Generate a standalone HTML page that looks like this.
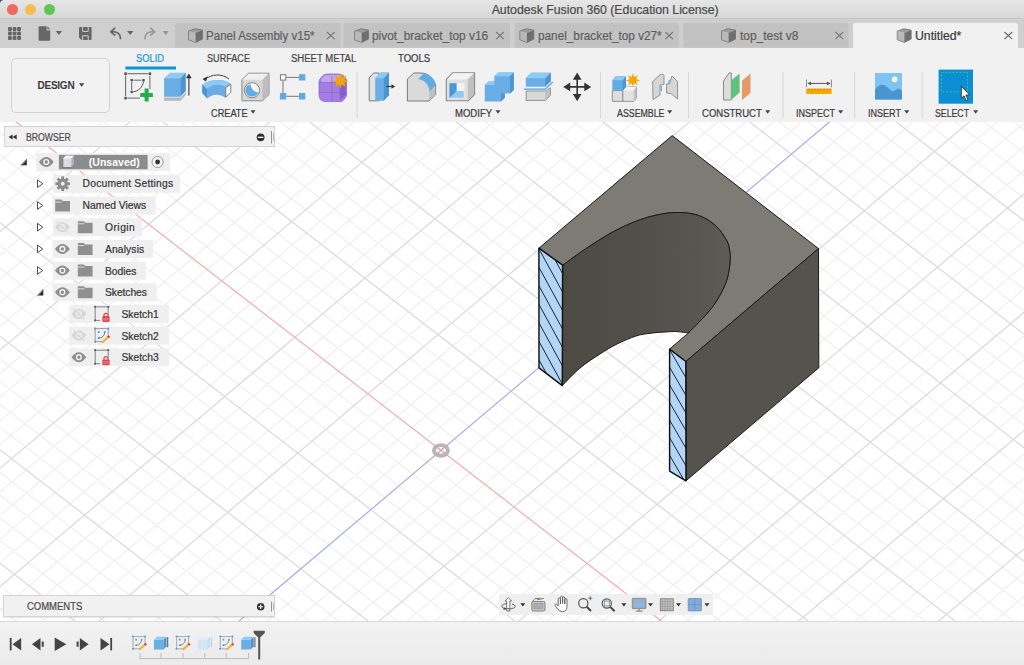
<!DOCTYPE html>
<html><head><meta charset="utf-8"><title>Fusion 360</title>
<style>
html,body{margin:0;padding:0;width:1024px;height:665px;overflow:hidden;background:#fff;}
.abs{position:absolute;}
.txt{font-family:"Liberation Sans",sans-serif;white-space:nowrap;line-height:1;}
.txt{-webkit-text-stroke:0.2px currentColor;}
.b{font-weight:bold;-webkit-text-stroke:0;}
</style></head><body>
<!-- TITLE BAR -->
<div class="abs" style="left:0;top:0;width:1024px;height:18.6px;background:linear-gradient(#e6e6e6,#d7d7d7);border-bottom:1px solid #c6c6c6;box-sizing:border-box"></div>
<div class="abs" style="left:7.2px;top:3.7px;width:11px;height:11px;border-radius:50%;background:#ee6a5e;"></div>
<div class="abs" style="left:25.2px;top:3.7px;width:11px;height:11px;border-radius:50%;background:#f5be4f;"></div>
<div class="abs" style="left:43.5px;top:3.7px;width:11px;height:11px;border-radius:50%;background:#62c655;"></div>

<!-- TAB BAR -->
<div class="abs" style="left:0;top:18.6px;width:1024px;height:29px;background:#cfcfcf;"></div>
<svg class="abs" style="left:0;top:18px" width="180" height="30" viewBox="0 18 180 30">
  <g fill="#666">
    <rect x="8.0" y="27.0" width="3.9" height="3.9" rx="1"/><rect x="12.6" y="27.0" width="3.9" height="3.9" rx="1"/><rect x="17.1" y="27.0" width="3.9" height="3.9" rx="1"/><rect x="8.0" y="31.6" width="3.9" height="3.9" rx="1"/><rect x="12.6" y="31.6" width="3.9" height="3.9" rx="1"/><rect x="17.1" y="31.6" width="3.9" height="3.9" rx="1"/><rect x="8.0" y="36.1" width="3.9" height="3.9" rx="1"/><rect x="12.6" y="36.1" width="3.9" height="3.9" rx="1"/><rect x="17.1" y="36.1" width="3.9" height="3.9" rx="1"/>
    <path d="M39.5 26.2 H46.6 V30.6 H50.2 V39.8 Q50.2 40.8 49.2 40.8 H39.5 Q38.6 40.8 38.6 39.8 V27.2 Q38.6 26.2 39.5 26.2 Z"/>
    <path d="M47.4 26.2 L50.2 29.2 H47.4 Z"/>
    <path d="M55.7 31 H62 L58.85 35 Z"/>
    <path d="M80 27 H90.6 Q91.6 27 91.6 28 V39 Q91.6 40 90.6 40 H81.5 L79 37.5 V28 Q79 27 80 27 Z"/>
  </g>
  <path d="M82.6 27 V31.4 H88.2 V27" fill="none" stroke="#cfcfcf" stroke-width="1"/>
  <path d="M82.6 40 V35.8 H88.2 V40" fill="none" stroke="#cfcfcf" stroke-width="1"/>
  <g fill="#666">
    <path d="M127 31 H133.4 L130.2 35 Z"/>
  </g>
  <path d="M120.5 38.5 C120.5 33 117 31.5 111.5 31.5 M114.8 28.2 L110.8 31.8 L114.8 35.2" fill="none" stroke="#666" stroke-width="1.7" stroke-linecap="round" stroke-linejoin="round"/>
  <path d="M145 38.5 C145 33 148.5 31.5 154 31.5 M150.7 28.2 L154.7 31.8 L150.7 35.2" fill="none" stroke="#999" stroke-width="1.7" stroke-linecap="round" stroke-linejoin="round"/>
  <path d="M162.7 31 H168.9 L165.8 35 Z" fill="#999"/>
</svg>

<!-- corner --><svg class="abs" style="left:0;top:0" width="6" height="6"><path d="M0 0 H3.2 Q0.8 0.6 0 3.2 Z" fill="#3d5a7e"/></svg>

<div class="abs txt" style="left:491.7px;top:3.99px;font-size:12.30px;color:#4a4a4a;letter-spacing:-0.017px;">Autodesk Fusion 360 (Education License)</div>
<svg class="abs" style="left:0;top:0" width="1024" height="48" viewBox="0 0 1024 48">
<path d="M175.0 47.5 V26 Q175.0 22.8 178.0 22.8 H337.6 Q340.6 22.8 340.6 26 V47.5 Z" fill="#c2c2c2"/>
<path d="M188.5 31.1 195.0 28.7 202.5 30.1 195.6 33.1 Z" fill="#9c9c9c"/><path d="M188.5 31.1 195.6 33.1 195.6 42.5 188.5 39.7 Z" fill="#b9b9b9"/><path d="M195.6 33.1 202.5 30.1 202.5 39.1 195.6 42.5 Z" fill="#6f6f6f"/><path d="M188.5 31.1 195.0 28.7 202.5 30.1 202.5 39.1 195.6 42.5 188.5 39.7 Z" fill="none" stroke="#6a6a6a" stroke-width="0.7" stroke-linejoin="round"/>
<path d="M326.9 32 L334.6 39.2 M334.6 32 L326.9 39.2" stroke="#777" stroke-width="1.1"/>
<path d="M343.5 47.5 V26 Q343.5 22.8 346.5 22.8 H507.0 Q510.0 22.8 510.0 26 V47.5 Z" fill="#c2c2c2"/>
<path d="M354.5 31.1 361.0 28.7 368.5 30.1 361.6 33.1 Z" fill="#9c9c9c"/><path d="M354.5 31.1 361.6 33.1 361.6 42.5 354.5 39.7 Z" fill="#b9b9b9"/><path d="M361.6 33.1 368.5 30.1 368.5 39.1 361.6 42.5 Z" fill="#6f6f6f"/><path d="M354.5 31.1 361.0 28.7 368.5 30.1 368.5 39.1 361.6 42.5 354.5 39.7 Z" fill="none" stroke="#6a6a6a" stroke-width="0.7" stroke-linejoin="round"/>
<path d="M496.1 32 L503.8 39.2 M503.8 32 L496.1 39.2" stroke="#777" stroke-width="1.1"/>
<path d="M514.8 47.5 V26 Q514.8 22.8 517.8 22.8 H676.0 Q679.0 22.8 679.0 26 V47.5 Z" fill="#c2c2c2"/>
<path d="M519.8 31.1 526.3 28.7 533.8 30.1 526.9 33.1 Z" fill="#9c9c9c"/><path d="M519.8 31.1 526.9 33.1 526.9 42.5 519.8 39.7 Z" fill="#b9b9b9"/><path d="M526.9 33.1 533.8 30.1 533.8 39.1 526.9 42.5 Z" fill="#6f6f6f"/><path d="M519.8 31.1 526.3 28.7 533.8 30.1 533.8 39.1 526.9 42.5 519.8 39.7 Z" fill="none" stroke="#6a6a6a" stroke-width="0.7" stroke-linejoin="round"/>
<path d="M665.3 32 L673.0 39.2 M673.0 32 L665.3 39.2" stroke="#777" stroke-width="1.1"/>
<path d="M683.4 47.5 V26 Q683.4 22.8 686.4 22.8 H845.6 Q848.6 22.8 848.6 26 V47.5 Z" fill="#c2c2c2"/>
<path d="M721.5 31.1 728.0 28.7 735.5 30.1 728.6 33.1 Z" fill="#9c9c9c"/><path d="M721.5 31.1 728.6 33.1 728.6 42.5 721.5 39.7 Z" fill="#b9b9b9"/><path d="M728.6 33.1 735.5 30.1 735.5 39.1 728.6 42.5 Z" fill="#6f6f6f"/><path d="M721.5 31.1 728.0 28.7 735.5 30.1 735.5 39.1 728.6 42.5 721.5 39.7 Z" fill="none" stroke="#6a6a6a" stroke-width="0.7" stroke-linejoin="round"/>
<path d="M835.5 32 L843.2 39.2 M843.2 32 L835.5 39.2" stroke="#777" stroke-width="1.1"/>
<path d="M853.0 48.0 V26 Q853.0 22.8 856.0 22.8 H1015.0 Q1018.0 22.8 1018.0 26 V48.0 Z" fill="#f1f1f1"/>
<path d="M897.2 31.1 903.7 28.7 911.2 30.1 904.3 33.1 Z" fill="#9c9c9c"/><path d="M897.2 31.1 904.3 33.1 904.3 42.5 897.2 39.7 Z" fill="#b9b9b9"/><path d="M904.3 33.1 911.2 30.1 911.2 39.1 904.3 42.5 Z" fill="#6f6f6f"/><path d="M897.2 31.1 903.7 28.7 911.2 30.1 911.2 39.1 904.3 42.5 897.2 39.7 Z" fill="none" stroke="#6a6a6a" stroke-width="0.7" stroke-linejoin="round"/>
<path d="M1004.5 32 L1012.2 39.2 M1012.2 32 L1004.5 39.2" stroke="#666" stroke-width="1.1"/>
</svg>
<div class="abs txt" style="left:206.0px;top:29.74px;font-size:12.00px;color:#5e5e5e;letter-spacing:0.000px;transform:scaleX(0.9630);transform-origin:0 0;">Panel Assembly v15*</div>
<div class="abs txt" style="left:372.3px;top:29.74px;font-size:12.00px;color:#5e5e5e;letter-spacing:0.000px;transform:scaleX(0.9888);transform-origin:0 0;">pivot_bracket_top v16</div>
<div class="abs txt" style="left:538.0px;top:29.74px;font-size:12.00px;color:#5e5e5e;letter-spacing:0.000px;transform:scaleX(0.9810);transform-origin:0 0;">panel_bracket_top v27*</div>
<div class="abs txt" style="left:739.8px;top:29.74px;font-size:12.00px;color:#5e5e5e;letter-spacing:0.000px;transform:scaleX(0.9948);transform-origin:0 0;">top_test v8</div>
<div class="abs txt" style="left:915.1px;top:29.74px;font-size:12.00px;color:#3a3a3a;letter-spacing:0.000px;transform:scaleX(1.0230);transform-origin:0 0;">Untitled*</div>
<!-- TOOLBAR -->
<div class="abs" style="left:0;top:47.5px;width:1024px;height:74.5px;background:#f1f1f1;"></div>
<div class="abs" style="left:10.5px;top:57.5px;width:99px;height:55px;border:1px solid #d2d2d2;border-radius:5px;box-sizing:border-box;background:#f2f2f2"></div>

<svg class="abs" style="left:0;top:0" width="1024" height="122" viewBox="0 0 1024 122">
  <path d="M79 83.2 H84.4 L81.7 86.8 Z" fill="#444"/>
  <rect x="125.4" y="66.5" width="50.6" height="3" fill="#0a96d6"/>
  <!-- separators -->
  <g fill="#d6d6d6"><rect x="356.6" y="72" width="1" height="46"/><rect x="600" y="72" width="1" height="46"/><rect x="688" y="72" width="1" height="46"/><rect x="782.5" y="72" width="1" height="46"/><rect x="854.2" y="72" width="1" height="46"/><rect x="921.6" y="72" width="1" height="46"/></g>
  <!-- dropdown arrows -->
  <g fill="#444">
    <path d="M250.5 110.3 H255.5 L253.00 113.8 Z"/>
    <path d="M495.5 110.3 H500.5 L498.00 113.8 Z"/>
    <path d="M667.2 110.3 H672.2 L669.70 113.8 Z"/>
    <path d="M765.2 110.3 H770.2 L767.70 113.8 Z"/>
    <path d="M838.2 110.3 H843.2 L840.70 113.8 Z"/>
    <path d="M904.2 110.3 H909.2 L906.70 113.8 Z"/>
    <path d="M973.2 110.3 H978.2 L975.70 113.8 Z"/>
  </g>
  <!-- sketch icon -->
  <g fill="#555">
    <rect x="124.3" y="72.4" width="2.6" height="2.6"/><rect x="148.6" y="72.4" width="2.6" height="2.6"/><rect x="124.3" y="96.8" width="2.6" height="2.6"/>
    <rect x="130.5" y="79" width="2.4" height="2.4"/><rect x="142.3" y="79" width="2.4" height="2.4"/><rect x="130.5" y="90.7" width="2.4" height="2.4"/>
  </g>
  <g stroke="#666" stroke-width="1" fill="none">
    <path d="M127.5 73.7 H148 M125.6 75.6 V96 M127.5 98.1 H140 M149.9 75.6 V89"/>
    <path d="M133.5 80.2 H141.5 M131.7 82 V90"/>
    <path d="M143.5 81.5 C143 87 138 91.5 133.2 91.8" stroke="#555"/>
  </g>
  <path d="M144.6 88.6 H148.6 V93 H152.9 V97 H148.6 V101.4 H144.6 V97 H140.3 V93 H144.6 Z" fill="#22ac4b"/>
  <!-- extrude -->
  <path d="M164 97.5 H180.5 L186 92 V94.8 L180.5 100.8 H164 Z" fill="#b9b9b9"/>
  <path d="M164.1 78.2 L170 72.7 H185.8 L180.2 78.2 Z" fill="#8dcaf6"/>
  <rect x="164.1" y="78.2" width="16.1" height="18.6" fill="#6aaee5"/>
  <path d="M180.2 78.2 L185.8 72.7 V91 L180.2 96.8 Z" fill="#4b95d2"/>
  <rect x="188.2" y="76" width="1.3" height="19.6" fill="#555"/><path d="M186 78.2 L188.85 73.6 L191.7 78.2 Z" fill="#333"/>
  <!-- revolve -->
  <path d="M204 80 C212 73.5 222 73.5 229 79" fill="none" stroke="#444" stroke-width="1"/>
  <path d="M202.5 79 L207.8 76.2 L206 81.5 Z" fill="#333"/>
  <path d="M202.3 84.8 C209 79.5 222 78 230.5 83.5 L230 89 L225.3 97.7 C220 93.5 212 93.5 207.4 98.5 L202.3 93 Z" fill="#6aaee5"/>
  <path d="M202.3 84.8 C209 79.5 222 78 230.5 83.5 L226 87 C220 83.5 212 84 207 89 Z" fill="#8dcaf6"/>
  <path d="M202.3 84.8 L207 89 V98.3 L202.3 93 Z" fill="#4b95d2"/>
  <path d="M225.8 87.5 L230.8 84.3 V92.5 L225.8 97.2 Z" fill="#fff" stroke="#666" stroke-width="0.8"/>
  <!-- hole -->
  <path d="M241.9 79.7 L248.6 73.2 H269 V94.5 L262.5 100.8 H241.9 Z" fill="#d7d7d7" stroke="#8a8a8a" stroke-width="1"/>
  <path d="M242.4 79.7 L248.8 73.7 H268.5 L262.5 79.7 Z" fill="#f0f0f0"/>
  <path d="M262.5 79.7 L268.5 73.7 V94.3 L262.5 100.3 Z" fill="#bdbdbd"/>
  <circle cx="252" cy="90.2" r="7.6" fill="#f4f4f4" stroke="#777" stroke-width="0.9"/>
  <path d="M250.5 84.3 C251 89 254 92 258.2 92.6 C257 95.5 254.8 96.6 252 96.6 C248.3 96.6 245.5 93.8 245.5 90.2 C245.5 87.3 247.6 84.8 250.5 84.3 Z" fill="#62ace4"/>
  <!-- rect pattern -->
  <g stroke="#777" stroke-width="1"><path d="M286.2 77.4 H299 M283 80.5 V93 M286.2 96.3 H299"/></g>
  <rect x="280.4" y="74.7" width="5.4" height="5.4" fill="#f8f8f8" stroke="#7a7a7a" stroke-width="1"/>
  <g fill="#5eaae3"><rect x="299" y="74.2" width="6.3" height="6.3"/><rect x="279.9" y="93" width="6.3" height="6.5"/><rect x="299" y="93" width="6.3" height="6.5"/></g>
  <!-- form -->
  <path d="M327 74 H338 Q343 74 345.5 78 L346.5 80 V95 Q346.5 97 344 99.5 L342 101.6 H326 Q319 101.6 319 94.5 V82 Q319 79.5 321.5 77 L323 75.5 Q324.5 74 327 74 Z" fill="#a47de0" stroke="#9068d0" stroke-width="0.8"/>
  <path d="M321 80 Q323 75 328 75 H338 Q341 75 343 78 L339.5 82.5 H322 Z" fill="#c3a6f0"/>
  <path d="M339.5 86 L346 80 V95 L340 100.5 Z" fill="#8a5fcb"/>
  <path d="M320 82.5 H340 M331.8 76 V101 M319.5 92.5 H340" stroke="#8d62c8" stroke-width="0.7" fill="none"/>
  <path d="M340.5 73 L341.9 77.4 L346.3 75.5 L344.4 79.7 L348.4 81.5 L344.2 82.8 L345.8 87 L341.8 84.6 L340.5 88.6 L339.1 84.6 L335.2 87 L336.7 82.8 L332.6 81.5 L336.6 79.7 L334.7 75.5 L339.1 77.4 Z" fill="#f5a700"/>
  <!-- press pull -->
  <path d="M369.2 78 L373.5 73 H379 V100.8 H369.2 Z" fill="#e2e2e2" stroke="#7a7a7a" stroke-width="1"/>
  <path d="M375.2 78.2 L380.5 72.6 H389 V92.6 L383.8 100.8 H375.2 Z" fill="#6aaee5"/>
  <path d="M375.2 78.2 L380.5 72.6 H389 L383.8 78.2 Z" fill="#8dcaf6"/>
  <path d="M383.8 78.2 L389 72.6 V95.2 L383.8 100.8 Z" fill="#4b95d2"/>
  <path d="M386.5 86.5 H392.5" stroke="#333" stroke-width="1.2"/><path d="M391.5 84.2 L395.2 86.5 L391.5 88.8 Z" fill="#333"/>
  <!-- fillet -->
  <path d="M407.4 79 L413.8 73 H421 C428 73 435 79 435.6 86 V94.8 L429 101 H407.4 Z" fill="#dadada" stroke="#7a7a7a" stroke-width="1"/>
  <path d="M418 79.3 L423.4 73.4 C430 74 435 79 435.4 85.5 L429.5 92 C429 84 424 79.5 418 79.3 Z" fill="#62ace4"/>
  <path d="M429.5 92.3 L435.3 86.5 V94.8 L429 100.8 Z" fill="#c0c0c0"/>
  <!-- shell -->
  <path d="M446.3 79.5 L452.8 72.8 H474.6 V94.5 L468.4 100.8 H446.3 Z" fill="#e0e0e0" stroke="#8a8a8a" stroke-width="1.1"/>
  <path d="M446.8 79.5 L453 73.3 H474 L467.8 79.5 Z" fill="#f3f3f3"/>
  <path d="M467.8 79.5 L474 73.3 V94.3 L467.8 100.3 Z" fill="#c0c0c0"/>
  <rect x="449.8" y="83" width="14.5" height="14.8" fill="#f2f2f2"/>
  <path d="M449.5 83.3 H456.5 V91 H463.8 V97.8 H449.5 Z" fill="#8dcaf6"/>
  <path d="M449.5 83.3 H456.5 V91 L449.5 97.8 Z" fill="#4b95d2"/>
  <!-- combine -->
  <path d="M484.8 85 L488.6 81.5 H494.3 V76.3 L498.5 72.6 H513.8 V90 L510 93.6 H504.8 V97.8 L501 101.6 H484.8 Z" fill="#6aaee5"/>
  <path d="M494.3 76.3 L498.5 72.6 H513.8 L510 76.3 Z M484.8 85 L488.6 81.5 H494.3 V85 Z" fill="#8dcaf6"/>
  <path d="M510 76.3 L513.8 72.6 V90 L510 93.6 Z M501 93.6 H504.8 V97.8 L501 101.6 Z" fill="#4b95d2"/>
  <!-- split -->
  <path d="M525.8 78.2 L531.3 72.7 H550.8 V79.8 L545.3 86.8 H525.8 Z" fill="#6aaee5"/>
  <path d="M525.8 78.2 L531.3 72.7 H550.8 L545.3 78.2 Z" fill="#8dcaf6"/>
  <path d="M545.3 78.2 L550.8 72.7 V81.3 L545.3 86.8 Z" fill="#4b95d2"/>
  <path d="M523.9 89.1 H545.3 L552.8 82" stroke="#4aa6e8" stroke-width="1.2" fill="none"/>
  <path d="M526.2 91 H545.3 L550.5 87.8 V95.5 L545.3 100.4 H526.2 Z" fill="#d8d8d8" stroke="#8a8a8a" stroke-width="0.9"/>
  <path d="M545.3 91.2 L550.2 88.3 V95.3 L545.3 100.1 Z" fill="#c0c0c0"/>
  <!-- move -->
  <path d="M577.2 76 V98 M566.5 86.9 H588" stroke="#333" stroke-width="1.6"/>
  <path d="M577.2 72.6 L581.5 79.8 H572.9 Z M577.2 101.2 L581.5 94 H572.9 Z M563.3 86.9 L570.2 82.6 V91.2 Z M591.2 86.9 L584.3 82.6 V91.2 Z" fill="#333"/>
  <!-- new component -->
  <path d="M612.3 90.6 H622.8 V101.4 H612.3 Z" fill="#dedede" stroke="#8a8a8a" stroke-width="0.9"/>
  <path d="M622.8 90.6 L625.5 87.1 H636.5 V98 L633.7 101.4 H622.8 Z" fill="#e2e2e2" stroke="#8a8a8a" stroke-width="0.9"/>
  <path d="M622.8 90.6 L625.5 87.1 H636.5 L633.7 90.6 Z" fill="#f4f4f4"/>
  <path d="M633.7 90.6 L636.5 87.1 V98 L633.7 101.4 Z" fill="#c4c4c4"/>
  <path d="M612.3 80.3 L615.5 76.2 H626 V87 L622.8 90.6 H612.3 Z" fill="#62ace4"/>
  <path d="M612.3 80.3 L615.5 76.2 H626 L622.8 80.3 Z" fill="#8dcaf6"/>
  <path d="M622.8 80.3 L626 76.2 V87 L622.8 90.6 Z" fill="#4b95d2"/>
  <path d="M632.9 73 L634.1 76.9 L637.8 75.2 L636.2 78.9 L639.9 80.4 L636.2 81.6 L637.6 85.3 L634.1 83.2 L632.9 86.8 L631.7 83.2 L628.2 85.3 L629.6 81.6 L625.9 80.4 L629.6 78.9 L628 75.2 L631.7 76.9 Z" fill="#f5a700"/>
  <!-- joint -->
  <path d="M652.6 81.5 L660 74.8 C662 73.8 664 74 664 76 V84.6 L660 85 V95 L653 99.5 Z" fill="#d6d6d6" stroke="#8a8a8a" stroke-width="0.9"/>
  <path d="M672 76 L677.6 81.5 V99 L671 93.6 L666.5 93 V84 L669.5 83.5 Z" fill="#d6d6d6" stroke="#8a8a8a" stroke-width="0.9"/>
  <path d="M661.3 86 V91 M669 80 V84.5" stroke="#4aa6e8" stroke-width="1.1"/>
  <!-- construct -->
  <path d="M723.5 81 L729 73 H731.3 V100 H723.5 Z" fill="#dcdcdc" stroke="#8a8a8a" stroke-width="1"/>
  <path d="M731.1 80.5 L739.6 73.4 V92.5 L731.1 100 Z" fill="#5fc27b"/>
  <path d="M742 80.7 L750.5 73.4 V93 L742 100.1 Z" fill="#e59a68"/>
  <!-- measure -->
  <path d="M806.5 79.5 V87.3 M831.4 79.5 V87.3" stroke="#888" stroke-width="1"/>
  <path d="M808 83.4 H830" stroke="#555" stroke-width="1"/>
  <path d="M807.5 83.4 L811 81.5 V85.3 Z M830.4 83.4 L826.9 81.5 V85.3 Z" fill="#555"/>
  <rect x="806.2" y="88.6" width="25.4" height="5.4" fill="#f5a800"/>
  <path d="M809 88.6 V90.3 M812 88.6 V90.3 M815 88.6 V90.3 M818 88.6 V90.3 M821 88.6 V90.3 M824 88.6 V90.3 M827 88.6 V90.3 M830 88.6 V90.3" stroke="#9a6a00" stroke-width="0.6"/>
  <!-- insert -->
  <rect x="875" y="73" width="27" height="26.6" fill="#7ec3f3"/>
  <path d="M875 90 C879 84 883 83.5 887 87 C890 89.5 892.5 93 895 90.5 C897.5 88 900 88.5 902 91 V99.6 H875 Z" fill="#4a94cf"/>
  <circle cx="894.6" cy="79.4" r="2.8" fill="#fbf5c9"/>
  <!-- select -->
  <rect x="938.6" y="69.6" width="34.4" height="34.1" fill="#0b8fd4"/>
  <rect x="941.5" y="72.5" width="26" height="19.3" fill="none" stroke="#49bd82" stroke-width="0.9" stroke-dasharray="2,1.6"/>
  <path d="M961.3 86.3 V98.3 L964 95.8 L966.2 100.5 L968 99.6 L965.9 95 L969.7 94.9 Z" fill="#fff" stroke="#222" stroke-width="0.8"/>
</svg>

<div class="abs txt b" style="left:37.5px;top:80.94px;font-size:10.00px;color:#3a3a3a;letter-spacing:-0.248px;">DESIGN</div>
<div class="abs txt" style="left:136.0px;top:53.73px;font-size:10.00px;color:#1a97d5;letter-spacing:0.000px;transform:scaleX(0.9330);transform-origin:0 0;">SOLID</div>
<div class="abs txt" style="left:206.6px;top:53.73px;font-size:10.00px;color:#444;letter-spacing:0.000px;transform:scaleX(0.9104);transform-origin:0 0;">SURFACE</div>
<div class="abs txt" style="left:290.6px;top:53.73px;font-size:10.00px;color:#444;letter-spacing:0.000px;transform:scaleX(0.9517);transform-origin:0 0;">SHEET METAL</div>
<div class="abs txt" style="left:397.8px;top:53.73px;font-size:10.00px;color:#3a3a3a;letter-spacing:0.000px;transform:scaleX(0.9550);transform-origin:0 0;">TOOLS</div>
<div class="abs txt" style="left:211.0px;top:108.83px;font-size:10.00px;color:#3a3a3a;letter-spacing:0.000px;transform:scaleX(0.9192);transform-origin:0 0;">CREATE</div>
<div class="abs txt" style="left:454.7px;top:108.83px;font-size:10.00px;color:#3a3a3a;letter-spacing:0.000px;transform:scaleX(0.9541);transform-origin:0 0;">MODIFY</div>
<div class="abs txt" style="left:616.5px;top:108.83px;font-size:10.00px;color:#3a3a3a;letter-spacing:0.000px;transform:scaleX(0.8811);transform-origin:0 0;">ASSEMBLE</div>
<div class="abs txt" style="left:702.4px;top:108.83px;font-size:10.00px;color:#3a3a3a;letter-spacing:0.000px;transform:scaleX(0.9526);transform-origin:0 0;">CONSTRUCT</div>
<div class="abs txt" style="left:796.4px;top:108.83px;font-size:10.00px;color:#3a3a3a;letter-spacing:0.000px;transform:scaleX(0.9022);transform-origin:0 0;">INSPECT</div>
<div class="abs txt" style="left:867.5px;top:108.83px;font-size:10.00px;color:#3a3a3a;letter-spacing:0.000px;transform:scaleX(0.9044);transform-origin:0 0;">INSERT</div>
<div class="abs txt" style="left:935.0px;top:108.83px;font-size:10.00px;color:#3a3a3a;letter-spacing:0.000px;transform:scaleX(0.8740);transform-origin:0 0;">SELECT</div>
<svg class="abs" style="left:0;top:122px" width="1024" height="499" viewBox="0 122 1024 499" shape-rendering="geometricPrecision">
<rect x="0" y="122" width="1024" height="499" fill="#ffffff"/>
<path d="M0 -775.67 L1024 16.50 M0 -752.98 L1024 39.19 M0 -730.28 L1024 61.88 M0 -707.59 L1024 84.57 M0 -662.21 L1024 129.96 M0 -639.52 L1024 152.65 M0 -616.82 L1024 175.34 M0 -594.13 L1024 198.03 M0 -548.75 L1024 243.42 M0 -526.06 L1024 266.11 M0 -503.36 L1024 288.80 M0 -480.67 L1024 311.49 M0 -435.29 L1024 356.88 M0 -412.60 L1024 379.57 M0 -389.90 L1024 402.26 M0 -367.21 L1024 424.95 M0 -321.83 L1024 470.34 M0 -299.14 L1024 493.03 M0 -276.44 L1024 515.72 M0 -253.75 L1024 538.41 M0 -208.37 L1024 583.80 M0 -185.68 L1024 606.49 M0 -162.98 L1024 629.18 M0 -140.29 L1024 651.87 M0 -94.91 L1024 697.26 M0 -72.22 L1024 719.95 M0 -49.52 L1024 742.64 M0 -26.83 L1024 765.33 M0 18.55 L1024 810.72 M0 41.24 L1024 833.41 M0 63.94 L1024 856.10 M0 86.63 L1024 878.79 M0 132.01 L1024 924.18 M0 154.70 L1024 946.87 M0 177.40 L1024 969.56 M0 200.09 L1024 992.25 M0 245.47 L1024 1037.64 M0 268.16 L1024 1060.33 M0 290.86 L1024 1083.02 M0 313.55 L1024 1105.71 M0 358.93 L1024 1151.10 M0 381.62 L1024 1173.79 M0 404.32 L1024 1196.48 M0 427.01 L1024 1219.17 M0 472.39 L1024 1264.56 M0 495.08 L1024 1287.25 M0 517.78 L1024 1309.94 M0 540.47 L1024 1332.63 M0 585.85 L1024 1378.02 M0 608.54 L1024 1400.71 M0 631.24 L1024 1423.40 M0 653.93 L1024 1446.09 M0 699.31 L1024 1491.48 M0 722.00 L1024 1514.17 M0 744.70 L1024 1536.86 M0 767.39 L1024 1559.55 M0 18.76 L1024 -846.92 M0 42.42 L1024 -823.27 M0 66.08 L1024 -799.61 M0 89.74 L1024 -775.95 M0 137.05 L1024 -728.63 M0 160.71 L1024 -704.98 M0 184.37 L1024 -681.32 M0 208.03 L1024 -657.66 M0 255.34 L1024 -610.34 M0 279.00 L1024 -586.69 M0 302.66 L1024 -563.03 M0 326.32 L1024 -539.37 M0 373.63 L1024 -492.05 M0 397.29 L1024 -468.40 M0 420.95 L1024 -444.74 M0 444.61 L1024 -421.08 M0 491.92 L1024 -373.76 M0 515.58 L1024 -350.11 M0 539.24 L1024 -326.45 M0 562.90 L1024 -302.79 M0 610.21 L1024 -255.47 M0 633.87 L1024 -231.82 M0 657.53 L1024 -208.16 M0 681.19 L1024 -184.50 M0 728.50 L1024 -137.18 M0 752.16 L1024 -113.53 M0 775.82 L1024 -89.87 M0 799.48 L1024 -66.21 M0 846.79 L1024 -18.89 M0 870.45 L1024 4.76 M0 894.11 L1024 28.42 M0 917.77 L1024 52.08 M0 965.08 L1024 99.40 M0 988.74 L1024 123.05 M0 1012.40 L1024 146.71 M0 1036.06 L1024 170.37 M0 1083.37 L1024 217.69 M0 1107.03 L1024 241.34 M0 1130.69 L1024 265.00 M0 1154.35 L1024 288.66 M0 1201.66 L1024 335.98 M0 1225.32 L1024 359.63 M0 1248.98 L1024 383.29 M0 1272.64 L1024 406.95 M0 1319.95 L1024 454.27 M0 1343.61 L1024 477.92 M0 1367.27 L1024 501.58 M0 1390.93 L1024 525.24 M0 1438.24 L1024 572.56 M0 1461.90 L1024 596.21 M0 1485.56 L1024 619.87 M0 1509.22 L1024 643.53 M0 1556.53 L1024 690.85 M0 1580.19 L1024 714.50 M0 1603.85 L1024 738.16 M0 1627.51 L1024 761.82" stroke="#efefef" stroke-width="1.2" fill="none"/>
<path d="M0 -798.36 L1024 -6.19 M0 -684.90 L1024 107.27 M0 -571.44 L1024 220.73 M0 -457.98 L1024 334.19 M0 -344.52 L1024 447.65 M0 -231.06 L1024 561.11 M0 -117.60 L1024 674.57 M0 -4.14 L1024 788.03 M0 222.78 L1024 1014.95 M0 336.24 L1024 1128.41 M0 449.70 L1024 1241.87 M0 563.16 L1024 1355.33 M0 676.62 L1024 1468.79 M0 -4.89 L1024 -870.58 M0 113.40 L1024 -752.29 M0 231.69 L1024 -634.00 M0 349.98 L1024 -515.71 M0 468.27 L1024 -397.42 M0 586.56 L1024 -279.13 M0 704.85 L1024 -160.84 M0 941.43 L1024 75.74 M0 1059.72 L1024 194.03 M0 1178.01 L1024 312.32 M0 1296.30 L1024 430.61 M0 1414.59 L1024 548.90 M0 1532.88 L1024 667.19" stroke="#dbdbdb" stroke-width="1.25" fill="none"/>
<path d="M0 109.32 L1024 901.49" stroke="#f4abab" stroke-width="1.2"/>
<path d="M0 823.14 L1024 -42.55" stroke="#a8a8f2" stroke-width="1.2"/>
<ellipse cx="440.9" cy="450.4" rx="7" ry="5.3" fill="none" stroke="#b6b6b6" stroke-width="3.9"/>
<path d="M432.9 444.2 L448.9 456.6 M432.9 457.2 L448.9 443.6" stroke="#e9a0a0" stroke-width="1"/>
<defs><linearGradient id="inner" x1="0" y1="0" x2="1" y2="0"><stop offset="0" stop-color="#4d4943"/><stop offset="0.5" stop-color="#53504a"/><stop offset="0.85" stop-color="#595752"/><stop offset="1" stop-color="#5e5c57"/></linearGradient><pattern id="hatch" patternUnits="userSpaceOnUse" width="10" height="18.3" patternTransform="rotate(0)"><rect width="10" height="18.3" fill="#b3d6f8"/></pattern></defs>
<path d="M538.9 248.2 L672.2 135.6 L818.5 248.6 L685.8 361.5 L669.6 349.1 L688.4 333 L688.9 332.2 C690.7 330.4 695.9 325.4 699.7 321.4 C703.5 317.4 708.1 312.8 711.7 308.0 C715.3 303.2 718.8 297.5 721.4 292.5 C724.0 287.5 725.9 283.4 727.4 278.0 C728.9 272.6 729.9 264.7 730.2 260.0 C730.6 255.3 730.1 253.2 729.5 250.0 C728.9 246.8 729.0 244.8 726.8 240.8 C724.5 236.8 720.7 230.2 716.0 226.0 C711.3 221.8 705.2 217.7 698.4 215.4 C691.6 213.2 683.5 212.2 675.0 212.5 C666.5 212.8 657.1 214.6 647.7 217.3 C638.3 220.1 628.2 224.1 618.4 229.0 C608.6 233.9 598.3 240.6 589.0 246.6 C579.7 252.6 567.1 262.1 562.7 265.2 Z" fill="#7e7a74" stroke="#1a1a1a" stroke-width="1" stroke-linejoin="round"/>
<path d="M685.8 361.5 L818.5 248.6 L818.8 367.7 L686.0 480.8 Z" fill="#56524c" stroke="#1a1a1a" stroke-width="1" stroke-linejoin="round"/>
<path d="M562.7 265.2 C567.1 262.1 579.7 252.6 589.0 246.6 C598.3 240.6 608.6 233.9 618.4 229.0 C628.2 224.1 638.3 220.1 647.7 217.3 C657.1 214.6 666.5 212.8 675.0 212.5 C683.5 212.2 691.6 213.2 698.4 215.4 C705.2 217.7 711.3 221.8 716.0 226.0 C720.7 230.2 724.5 236.8 726.8 240.8 C729.0 244.8 728.9 246.8 729.5 250.0 C730.1 253.2 730.6 255.3 730.2 260.0 C729.9 264.7 728.9 272.6 727.4 278.0 C725.9 283.4 724.0 287.5 721.4 292.5 C718.8 297.5 715.3 303.2 711.7 308.0 C708.1 312.8 703.5 317.4 699.7 321.4 C695.9 325.4 690.7 330.4 688.9 332.2 L688.4 333  C686.5 332.8 680.7 331.8 677.0 331.6 C673.3 331.4 670.5 331.6 666.0 331.9 C661.5 332.2 655.0 332.6 650.0 333.3 C645.0 334.0 641.5 334.2 636.0 336.0 C630.5 337.8 623.0 341.0 617.0 344.0 C611.0 347.0 606.2 350.0 600.0 354.0 C593.8 358.0 586.3 362.7 580.0 368.0 C573.7 373.3 565.2 382.7 562.3 385.6 L562.6 265.2 Z" fill="url(#inner)" stroke="#1a1a1a" stroke-width="1"/>
<clipPath id="hc1"><path d="M538.9 248.2 L562.6 265.2 L562.3 385.6 L539.0 367.9 Z"/></clipPath><path d="M538.9 248.2 L562.6 265.2 L562.3 385.6 L539.0 367.9 Z" fill="#b3d6f8"/><path d="M533.9 17.6 L578.9 100.0 M533.9 36.1 L578.9 118.5 M533.9 54.6 L578.9 137.0 M533.9 73.1 L578.9 155.5 M533.9 91.6 L578.9 174.0 M533.9 110.1 L578.9 192.5 M533.9 128.6 L578.9 211.0 M533.9 147.1 L578.9 229.5 M533.9 165.6 L578.9 248.0 M533.9 184.1 L578.9 266.5 M533.9 202.6 L578.9 285.0 M533.9 221.1 L578.9 303.5 M533.9 239.6 L578.9 322.0 M533.9 258.1 L578.9 340.5 M533.9 276.6 L578.9 359.0 M533.9 295.1 L578.9 377.5 M533.9 313.6 L578.9 396.0 M533.9 332.1 L578.9 414.5 M533.9 350.6 L578.9 433.0 M533.9 369.1 L578.9 451.5 M533.9 387.6 L578.9 470.0 M533.9 406.1 L578.9 488.5 M533.9 424.6 L578.9 507.0 M533.9 443.1 L578.9 525.5" stroke="#111" stroke-width="0.9" clip-path="url(#hc1)"/><path d="M538.9 248.2 L562.6 265.2 L562.3 385.6 L539.0 367.9 Z" fill="none" stroke="#111" stroke-width="1.45" stroke-linejoin="round"/>
<clipPath id="hc2"><path d="M669.6 349.1 L685.8 361.5 L686.0 480.8 L669.6 471.1 Z"/></clipPath><path d="M669.6 349.1 L685.8 361.5 L686.0 480.8 L669.6 471.1 Z" fill="#b3d6f8"/><path d="M664.6 129.9 L709.6 207.3 M664.6 147.5 L709.6 224.9 M664.6 165.1 L709.6 242.5 M664.6 182.7 L709.6 260.1 M664.6 200.3 L709.6 277.7 M664.6 217.9 L709.6 295.3 M664.6 235.5 L709.6 312.9 M664.6 253.1 L709.6 330.5 M664.6 270.7 L709.6 348.1 M664.6 288.3 L709.6 365.7 M664.6 305.9 L709.6 383.3 M664.6 323.5 L709.6 400.9 M664.6 341.1 L709.6 418.5 M664.6 358.7 L709.6 436.1 M664.6 376.3 L709.6 453.7 M664.6 393.9 L709.6 471.3 M664.6 411.5 L709.6 488.9 M664.6 429.1 L709.6 506.5 M664.6 446.7 L709.6 524.1 M664.6 464.3 L709.6 541.7 M664.6 481.9 L709.6 559.3 M664.6 499.5 L709.6 576.9 M664.6 517.1 L709.6 594.5 M664.6 534.7 L709.6 612.1" stroke="#111" stroke-width="0.9" clip-path="url(#hc2)"/><path d="M669.6 349.1 L685.8 361.5 L686.0 480.8 L669.6 471.1 Z" fill="none" stroke="#111" stroke-width="1.45" stroke-linejoin="round"/>
</svg>
<div class="abs" style="left:3.5px;top:126.4px;width:271px;height:21.1px;background:#f1f1f1;border:1px solid #d3d3d3;box-sizing:border-box;"></div>
<div class="abs txt" style="left:26.4px;top:132.63px;font-size:10.00px;color:#4a4a4a;letter-spacing:0.000px;transform:scaleX(0.8670);transform-origin:0 0;">BROWSER</div>
<svg class="abs" style="left:0;top:120px" width="280" height="260" viewBox="0 120 280 260">
<path d="M8.5 137 L12.6 134.5 V139.5 Z M12.6 137 L16.7 134.5 V139.5 Z" fill="#333"/>
<circle cx="260.6" cy="137.3" r="3.9" fill="#2e2e2e"/><rect x="257.9" y="136.7" width="5.4" height="1.3" fill="#fff"/>
<rect x="271" y="131" width="0.9" height="12.5" fill="#8a8a8a"/><rect x="273" y="133" width="0.8" height="8" fill="#b0b0b0"/>
<rect x="36.0" y="153.1" width="134.0" height="18" fill="#efefef"/>
<rect x="52.7" y="174.8" width="127.3" height="18" fill="#efefef"/>
<rect x="52.7" y="196.6" width="102.9" height="18" fill="#efefef"/>
<rect x="52.8" y="218.3" width="89.1" height="18" fill="#efefef"/>
<rect x="52.8" y="240.0" width="100.0" height="18" fill="#efefef"/>
<rect x="52.8" y="261.6" width="93.0" height="18" fill="#efefef"/>
<rect x="52.8" y="283.3" width="103.9" height="18" fill="#efefef"/>
<rect x="69.1" y="305.0" width="99.9" height="18" fill="#efefef"/>
<rect x="69.1" y="326.7" width="99.9" height="18" fill="#efefef"/>
<rect x="69.1" y="348.3" width="99.9" height="18" fill="#efefef"/>
<path d="M20.5 165.3 L26.8 158.7 L26.8 165.3 Z" fill="#2a2a2a"/><path d="M22.0 164.6 L26.0 160.5" stroke="#fff" stroke-width="0.6"/>
<path d="M38.9 162.0 Q46.3 152.0 53.7 162.0 Q46.3 172.0 38.9 162.0 Z" fill="#8e8e8e"/><circle cx="46.3" cy="162.0" r="2.4" fill="none" stroke="#f0f0f0" stroke-width="1.4"/>
<rect x="58.9" y="154.9" width="88.7" height="14.4" fill="#8c8c8c"/>
<path d="M62.8 158.6 L65.8 155.6 H74.3 V164.6 L71.4 167.6 H62.8 Z" fill="#d9dce4" stroke="#5e5e5e" stroke-width="0.7" stroke-linejoin="round"/><path d="M62.8 158.6 L65.8 155.6 H74.3 L71.4 158.6 Z" fill="#f2f3f7"/><path d="M71.4 158.6 L74.3 155.6 V164.6 L71.4 167.6 Z" fill="#a9adb8"/>
<circle cx="157.6" cy="162" r="5.6" fill="#f4f4f4" stroke="#9a9a9a" stroke-width="1"/><circle cx="157.6" cy="162" r="2.4" fill="#333"/>
<path d="M37.5 179.9 L42.8 183.7 L37.5 187.5 Z" fill="#fff" stroke="#3a3a3a" stroke-width="0.9" stroke-linejoin="round"/>
<g fill="#8c8c8c"><rect x="61.3" y="176.4" width="2.8" height="3.2" transform="rotate(0 62.7 183.7)"/><rect x="61.3" y="176.4" width="2.8" height="3.2" transform="rotate(45 62.7 183.7)"/><rect x="61.3" y="176.4" width="2.8" height="3.2" transform="rotate(90 62.7 183.7)"/><rect x="61.3" y="176.4" width="2.8" height="3.2" transform="rotate(135 62.7 183.7)"/><rect x="61.3" y="176.4" width="2.8" height="3.2" transform="rotate(180 62.7 183.7)"/><rect x="61.3" y="176.4" width="2.8" height="3.2" transform="rotate(225 62.7 183.7)"/><rect x="61.3" y="176.4" width="2.8" height="3.2" transform="rotate(270 62.7 183.7)"/><rect x="61.3" y="176.4" width="2.8" height="3.2" transform="rotate(315 62.7 183.7)"/><circle cx="62.7" cy="183.7" r="5.2"/></g><circle cx="62.7" cy="183.7" r="2" fill="#efefef"/>
<path d="M37.5 201.7 L42.8 205.5 L37.5 209.3 Z" fill="#fff" stroke="#3a3a3a" stroke-width="0.9" stroke-linejoin="round"/>
<path d="M55.2 199.5 H61.2 L62.7 201.1 H70.0 V211.5 H55.2 Z" fill="#8f8f8f"/><path d="M55.2 202.1 H61.7" stroke="#f0f0f0" stroke-width="0.8"/>
<path d="M37.5 223.4 L42.8 227.2 L37.5 231.0 Z" fill="#fff" stroke="#3a3a3a" stroke-width="0.9" stroke-linejoin="round"/>
<path d="M55.0 227.2 Q62.4 217.2 69.8 227.2 Q62.4 237.2 55.0 227.2 Z" fill="#d6d6d6"/><circle cx="62.4" cy="227.2" r="2.4" fill="none" stroke="#f0f0f0" stroke-width="1.4"/><path d="M56.9 221.7 L67.9 232.7" stroke="#d6d6d6" stroke-width="1.1"/><path d="M57.2 220.7 L68.6 232.1" stroke="#efefef" stroke-width="0.8"/>
<path d="M77.8 221.2 H83.8 L85.3 222.8 H92.6 V233.2 H77.8 Z" fill="#8f8f8f"/><path d="M77.8 223.8 H84.3" stroke="#f0f0f0" stroke-width="0.8"/>
<path d="M37.5 245.1 L42.8 248.9 L37.5 252.7 Z" fill="#fff" stroke="#3a3a3a" stroke-width="0.9" stroke-linejoin="round"/>
<path d="M55.0 248.9 Q62.4 238.9 69.8 248.9 Q62.4 258.9 55.0 248.9 Z" fill="#8e8e8e"/><circle cx="62.4" cy="248.9" r="2.4" fill="none" stroke="#f0f0f0" stroke-width="1.4"/>
<path d="M77.8 242.9 H83.8 L85.3 244.5 H92.6 V254.9 H77.8 Z" fill="#8f8f8f"/><path d="M77.8 245.5 H84.3" stroke="#f0f0f0" stroke-width="0.8"/>
<path d="M37.5 266.7 L42.8 270.5 L37.5 274.3 Z" fill="#fff" stroke="#3a3a3a" stroke-width="0.9" stroke-linejoin="round"/>
<path d="M55.0 270.5 Q62.4 260.5 69.8 270.5 Q62.4 280.5 55.0 270.5 Z" fill="#8e8e8e"/><circle cx="62.4" cy="270.5" r="2.4" fill="none" stroke="#f0f0f0" stroke-width="1.4"/>
<path d="M77.8 264.5 H83.8 L85.3 266.1 H92.6 V276.5 H77.8 Z" fill="#8f8f8f"/><path d="M77.8 267.1 H84.3" stroke="#f0f0f0" stroke-width="0.8"/>
<path d="M37.0 295.5 L43.3 288.9 L43.3 295.5 Z" fill="#2a2a2a"/><path d="M38.5 294.8 L42.5 290.7" stroke="#fff" stroke-width="0.6"/>
<path d="M55.0 292.2 Q62.4 282.2 69.8 292.2 Q62.4 302.2 55.0 292.2 Z" fill="#8e8e8e"/><circle cx="62.4" cy="292.2" r="2.4" fill="none" stroke="#f0f0f0" stroke-width="1.4"/>
<path d="M77.8 286.2 H83.8 L85.3 287.8 H92.6 V298.2 H77.8 Z" fill="#8f8f8f"/><path d="M77.8 288.8 H84.3" stroke="#f0f0f0" stroke-width="0.8"/>
<path d="M71.5 313.9 Q78.9 303.9 86.3 313.9 Q78.9 323.9 71.5 313.9 Z" fill="#d6d6d6"/><circle cx="78.9" cy="313.9" r="2.4" fill="none" stroke="#f0f0f0" stroke-width="1.4"/><path d="M73.4 308.4 L84.4 319.4" stroke="#d6d6d6" stroke-width="1.1"/><path d="M73.7 307.4 L85.1 318.8" stroke="#efefef" stroke-width="0.8"/>
<path d="M95.2 306.9 H108.2 V313.9 M95.2 306.9 V320.4 H100.2" stroke="#777" stroke-width="0.9" fill="none"/><g fill="#555"><rect x="94.2" y="305.9" width="1.8" height="1.8"/><rect x="107.4" y="305.9" width="1.8" height="1.8"/><rect x="94.2" y="319.5" width="1.8" height="1.8"/></g><rect x="102.4" y="316.1" width="7.2" height="5.8" rx="0.8" fill="#e0454b"/><path d="M104.0 316.4 V314.5 Q106.0 312.1 108.0 314.5 V316.4" stroke="#e0454b" stroke-width="1.3" fill="none"/><path d="M103.4 318.4 H108.6 M103.4 319.9 H108.6" stroke="#f3a0a3" stroke-width="0.6"/>
<path d="M71.5 335.6 Q78.9 325.6 86.3 335.6 Q78.9 345.6 71.5 335.6 Z" fill="#d6d6d6"/><circle cx="78.9" cy="335.6" r="2.4" fill="none" stroke="#f0f0f0" stroke-width="1.4"/><path d="M73.4 330.1 L84.4 341.1" stroke="#d6d6d6" stroke-width="1.1"/><path d="M73.7 329.1 L85.1 340.5" stroke="#efefef" stroke-width="0.8"/>
<path d="M95.2 328.6 H108.2 V337.6 M95.2 328.6 V341.6 H103.2" stroke="#888" stroke-width="0.8" fill="none"/><g fill="#3d9ee6"><rect x="94.2" y="327.6" width="1.8" height="1.8"/><rect x="107.4" y="327.6" width="1.8" height="1.8"/><rect x="94.2" y="340.8" width="1.8" height="1.8"/><rect x="97.8" y="331.2" width="1.8" height="1.8"/><rect x="103.8" y="331.2" width="1.8" height="1.8"/><rect x="97.8" y="337.2" width="1.8" height="1.8"/></g><path d="M104.7 332.6 Q104.2 337.6 98.7 338.1" stroke="#666" stroke-width="0.8" fill="none"/><path d="M101.2 342.1 L107.7 336.1 L109.2 337.6 L102.7 343.6 Z" fill="#f2b134"/><path d="M107.8 336.0 L109.6 337.5" stroke="#e53c3c" stroke-width="2.2"/>
<path d="M71.5 357.2 Q78.9 347.2 86.3 357.2 Q78.9 367.2 71.5 357.2 Z" fill="#8e8e8e"/><circle cx="78.9" cy="357.2" r="2.4" fill="none" stroke="#f0f0f0" stroke-width="1.4"/>
<path d="M95.2 350.2 H108.2 V357.2 M95.2 350.2 V363.7 H100.2" stroke="#777" stroke-width="0.9" fill="none"/><g fill="#555"><rect x="94.2" y="349.2" width="1.8" height="1.8"/><rect x="107.4" y="349.2" width="1.8" height="1.8"/><rect x="94.2" y="362.8" width="1.8" height="1.8"/></g><rect x="102.4" y="359.4" width="7.2" height="5.8" rx="0.8" fill="#e0454b"/><path d="M104.0 359.7 V357.8 Q106.0 355.4 108.0 357.8 V359.7" stroke="#e0454b" stroke-width="1.3" fill="none"/><path d="M103.4 361.7 H108.6 M103.4 363.2 H108.6" stroke="#f3a0a3" stroke-width="0.6"/>
</svg>
<div class="abs txt b" style="left:88.8px;top:157.01px;font-size:10.50px;color:#ffffff;letter-spacing:0.017px;">(Unsaved)</div>
<div class="abs txt" style="left:82.6px;top:179.48px;font-size:10.30px;color:#333333;letter-spacing:0.219px;">Document Settings</div>
<div class="abs txt" style="left:82.6px;top:201.28px;font-size:10.30px;color:#333333;letter-spacing:0.027px;">Named Views</div>
<div class="abs txt" style="left:105.0px;top:223.28px;font-size:10.30px;color:#333333;letter-spacing:0.467px;">Origin</div>
<div class="abs txt" style="left:105.0px;top:244.98px;font-size:10.30px;color:#333333;letter-spacing:0.123px;">Analysis</div>
<div class="abs txt" style="left:105.0px;top:266.58px;font-size:10.30px;color:#333333;letter-spacing:-0.017px;">Bodies</div>
<div class="abs txt" style="left:105.0px;top:288.28px;font-size:10.30px;color:#333333;letter-spacing:-0.065px;">Sketches</div>
<div class="abs txt" style="left:121.4px;top:309.98px;font-size:10.30px;color:#333333;letter-spacing:0.016px;">Sketch1</div>
<div class="abs txt" style="left:121.4px;top:331.68px;font-size:10.30px;color:#333333;letter-spacing:0.016px;">Sketch2</div>
<div class="abs txt" style="left:121.4px;top:353.28px;font-size:10.30px;color:#333333;letter-spacing:0.016px;">Sketch3</div>
<div class="abs" style="left:3.4px;top:595.2px;width:271.3px;height:21.5px;background:#f1f1f1;border:1px solid #d3d3d3;box-sizing:border-box;box-shadow:0 1px 1px rgba(0,0,0,0.08);"></div>
<div class="abs txt" style="left:26.7px;top:602.03px;font-size:10.00px;color:#4a4a4a;letter-spacing:0.000px;transform:scaleX(0.9481);transform-origin:0 0;">COMMENTS</div>
<div class="abs" style="left:498.5px;top:594.4px;width:214.3px;height:20.2px;background:#efefef;"></div>
<div class="abs" style="left:0;top:621px;width:1024px;height:44px;background:linear-gradient(#f2f2f2,#ebebeb);border-top:1.5px solid #dadada;box-sizing:border-box;"></div>
<svg class="abs" style="left:0;top:585px" width="1024" height="80" viewBox="0 585 1024 80">
<circle cx="260.7" cy="606.8" r="3.8" fill="#2e2e2e"/><path d="M258.2 606.8 H263.2 M260.7 604.3 V609.3" stroke="#fff" stroke-width="1.1"/>
<rect x="271" y="601.6" width="0.9" height="10" fill="#8a8a8a"/><rect x="273" y="603" width="0.8" height="7" fill="#b0b0b0"/>
<g fill="#444"><rect x="9.8" y="637.9" width="1.8" height="12.5"/><path d="M21.2 637.9 V650.4 L12.5 644.15 Z"/><path d="M32 644.15 L40.5 637.9 V650.4 Z"/><rect x="41.7" y="641.5" width="2" height="5.3"/><path d="M54.7 637.4 L66.3 644.15 L54.7 650.9 Z"/><rect x="76.6" y="641.5" width="2" height="5.3"/><path d="M79.8 637.9 L88.6 644.15 L79.8 650.4 Z"/><path d="M100.5 637.9 V650.4 L109.5 644.15 Z"/><rect x="110.3" y="637.9" width="1.8" height="12.5"/></g>
<path d="M133.0 636.6 H145.0 V644.6 M133.0 636.6 V648.8 H140.0" stroke="#999" stroke-width="0.8" fill="none"/><g fill="#3d9ee6"><rect x="132.0" y="635.6" width="1.6" height="1.6"/><rect x="144.4" y="635.6" width="1.6" height="1.6"/><rect x="132.0" y="648.0" width="1.6" height="1.6"/><rect x="135.3" y="638.9" width="1.6" height="1.6"/><rect x="140.8" y="638.9" width="1.6" height="1.6"/><rect x="135.3" y="644.4" width="1.6" height="1.6"/></g><path d="M141.5 640.1 Q141.0 644.6 136.3 645.2" stroke="#666" stroke-width="0.7" fill="none"/><path d="M138.5 649.1 L144.5 643.6 L146.0 645.0 L140.0 650.4 Z" fill="#f2b134"/><path d="M144.6 643.5 L146.3 645.0" stroke="#e53c3c" stroke-width="2"/>
<path d="M154.0 647.3 H163.5 L166.5 644.3 V646.0 L163.5 649.6 H154.0 Z" fill="#b9b9b9"/><rect x="154.0" y="639.8" width="9.5" height="9.5" fill="#6aaee5"/><path d="M154.0 639.8 L157.0 636.8 H166.5 L163.5 639.8 Z" fill="#8dcaf6"/><path d="M163.5 639.8 L166.5 636.8 V646.3 L163.5 649.3 Z" fill="#4b95d2"/><rect x="167.2" y="637.3" width="1" height="10" fill="#555"/>
<path d="M176.6 636.6 H188.6 V644.6 M176.6 636.6 V648.8 H183.6" stroke="#999" stroke-width="0.8" fill="none"/><g fill="#3d9ee6"><rect x="175.6" y="635.6" width="1.6" height="1.6"/><rect x="188.0" y="635.6" width="1.6" height="1.6"/><rect x="175.6" y="648.0" width="1.6" height="1.6"/><rect x="178.9" y="638.9" width="1.6" height="1.6"/><rect x="184.4" y="638.9" width="1.6" height="1.6"/><rect x="178.9" y="644.4" width="1.6" height="1.6"/></g><path d="M185.1 640.1 Q184.6 644.6 179.9 645.2" stroke="#666" stroke-width="0.7" fill="none"/><path d="M182.1 649.1 L188.1 643.6 L189.6 645.0 L183.6 650.4 Z" fill="#f2b134"/><path d="M188.2 643.5 L189.9 645.0" stroke="#e53c3c" stroke-width="2"/>
<path d="M197.7 647.3 H207.2 L210.2 644.3 V646.0 L207.2 649.6 H197.7 Z" fill="#e3e3e3"/><rect x="197.7" y="639.8" width="9.5" height="9.5" fill="#d3e6f5"/><path d="M197.7 639.8 L200.7 636.8 H210.2 L207.2 639.8 Z" fill="#dfeefa"/><path d="M207.2 639.8 L210.2 636.8 V646.3 L207.2 649.3 Z" fill="#c6def2"/><rect x="210.9" y="637.3" width="1" height="10" fill="#ccc"/>
<path d="M220.3 636.6 H232.3 V644.6 M220.3 636.6 V648.8 H227.3" stroke="#999" stroke-width="0.8" fill="none"/><g fill="#3d9ee6"><rect x="219.3" y="635.6" width="1.6" height="1.6"/><rect x="231.7" y="635.6" width="1.6" height="1.6"/><rect x="219.3" y="648.0" width="1.6" height="1.6"/><rect x="222.6" y="638.9" width="1.6" height="1.6"/><rect x="228.1" y="638.9" width="1.6" height="1.6"/><rect x="222.6" y="644.4" width="1.6" height="1.6"/></g><path d="M228.8 640.1 Q228.3 644.6 223.6 645.2" stroke="#666" stroke-width="0.7" fill="none"/><path d="M225.8 649.1 L231.8 643.6 L233.3 645.0 L227.3 650.4 Z" fill="#f2b134"/><path d="M231.9 643.5 L233.6 645.0" stroke="#e53c3c" stroke-width="2"/>
<path d="M241.2 647.3 H250.7 L253.7 644.3 V646.0 L250.7 649.6 H241.2 Z" fill="#b9b9b9"/><rect x="241.2" y="639.8" width="9.5" height="9.5" fill="#6aaee5"/><path d="M241.2 639.8 L244.2 636.8 H253.7 L250.7 639.8 Z" fill="#8dcaf6"/><path d="M250.7 639.8 L253.7 636.8 V646.3 L250.7 649.3 Z" fill="#4b95d2"/><rect x="254.4" y="637.3" width="1" height="10" fill="#555"/>
<path d="M140 653 V658.6 H248.6 V653 M161 653 V658.6 M183 653 V658.6 M204.7 653 V658.6 M226.2 653 V658.6" stroke="#bcbcbc" stroke-width="1" fill="none"/>
<path d="M253.6 630.7 H264.8 V633 L260.2 637.5 V659.4 H258.2 V637.5 L253.6 633 Z" fill="#555"/>
<path d="M506.7 611 V601 H505 L508.3 597.6 L511.6 601 H509.9 V611 Z" fill="#fff" stroke="#666" stroke-width="0.9" stroke-linejoin="round"/><path d="M506.6 603.6 C503 604.2 501.8 605.3 501.8 606.3 C501.8 607.8 505 608.8 509 608.8 C512.8 608.8 515.2 607.8 515.2 606.3 C515.2 605.3 514 604.5 512 604" fill="none" stroke="#555" stroke-width="1"/><path d="M504.4 607.2 L505.9 609.8 L503 609.6 Z" fill="#444"/>
<path d="M520.3 603.2 H525.3 L522.8 606.6 Z" fill="#333"/>
<path d="M621.4 603.2 H626.4 L623.9 606.6 Z" fill="#333"/>
<path d="M648.0 603.2 H653.0 L650.5 606.6 Z" fill="#333"/>
<path d="M676.0 603.2 H681.0 L678.5 606.6 Z" fill="#333"/>
<path d="M704.5 603.2 H709.5 L707.0 606.6 Z" fill="#333"/>
<rect x="531.8" y="601.5" width="13.2" height="9.5" rx="1.2" fill="#cfcfcf" stroke="#777" stroke-width="0.9"/><rect x="533.8" y="603.3" width="9.2" height="5.6" fill="#a9adb5" stroke="#888" stroke-width="0.5"/><path d="M532.5 601.5 L535 598.6 L540.5 598.2 M537 599.8 L543.8 598.4" stroke="#777" stroke-width="1" fill="none"/>
<path d="M558.2 606 V599.2 Q558.2 598 559.3 598 Q560.4 598 560.4 599.2 V604 V597.5 Q560.4 596.3 561.5 596.3 Q562.6 596.3 562.6 597.5 V603.5 V598 Q562.6 596.8 563.7 596.8 Q564.8 596.8 564.8 598 V604 V599.8 Q564.8 598.6 565.9 598.6 Q567 598.6 567 599.8 V606.5 Q567 611.6 562.5 611.6 Q559.6 611.6 557.8 609.3 L555.3 605.8 Q554.6 604.6 555.6 604.1 Q556.5 603.7 557.3 604.7 Z" fill="#fff" stroke="#555" stroke-width="0.85" stroke-linejoin="round"/>
<circle cx="583.3" cy="603.3" r="4.6" fill="#eaf2f8" stroke="#555" stroke-width="1.2"/><path d="M586.7 606.7 L591 611" stroke="#444" stroke-width="2"/><path d="M590.3 596.2 V600.2 M588.3 598.2 H592.3" stroke="#555" stroke-width="0.8"/>
<circle cx="606.8" cy="603.5" r="4.6" fill="#eaf2f8" stroke="#555" stroke-width="1.2"/><rect x="604.3" y="601" width="5" height="5" fill="none" stroke="#777" stroke-width="0.8"/><path d="M610.2 606.9 L614.6 611.3" stroke="#444" stroke-width="2"/>
<rect x="632.2" y="598.3" width="13.8" height="10.4" rx="0.8" fill="#a8a8a8" stroke="#7a7a7a" stroke-width="0.7"/><rect x="633.8" y="599.8" width="10.6" height="7.4" fill="#8fb4e2"/><path d="M639.1 608.8 V610.5 M635.8 611.2 H642.4" stroke="#888" stroke-width="1.2"/>
<rect x="660.3" y="598.8" width="13" height="12" fill="#c4c4c4" stroke="#777" stroke-width="0.8"/><path d="M662.5 599 V611 M665 599 V611 M667.5 599 V611 M670 599 V611 M660.5 601.5 H673 M660.5 604 H673 M660.5 606.5 H673 M660.5 609 H673" stroke="#8a8a8a" stroke-width="0.5"/>
<rect x="688.2" y="598.5" width="13.2" height="12.4" rx="0.8" fill="#86aadb" stroke="#6b8fc2" stroke-width="0.8"/><path d="M694.8 598.5 V611 M688.2 604.7 H701.4" stroke="#6f93c6" stroke-width="0.9"/>
</svg>
</body></html>
